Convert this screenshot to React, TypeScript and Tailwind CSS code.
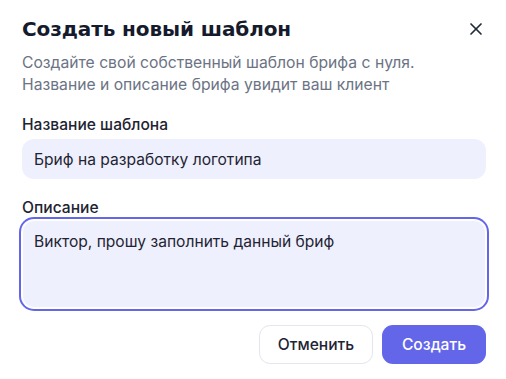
import { X } from "lucide-react";

export default function App() {
  return (
    <div className="min-h-screen w-full bg-white font-['Inter','Noto_Sans',sans-serif] text-[#1f2937]">
      <div className="flex flex-col pl-[22px] pr-[20px] pt-[14px]">
        <div className="flex items-center justify-between">
          <h2 className="font-['DejaVu_Sans',sans-serif] text-[20px] font-bold leading-[30px] tracking-[-0.1px] text-[#151b2c]">
            Создать новый шаблон
          </h2>
          <button className="-mr-[2px] flex h-6 w-6 items-center justify-center text-[#1f2937]">
            <X size={20} strokeWidth={2} />
          </button>
        </div>
        <p className="mt-[8px] text-[15.7px] leading-[22px] text-[#6b7384]">
          Создайте свой собственный шаблон брифа с нуля.
          <br />
          Название и описание брифа увидит ваш клиент
        </p>

        <label className="mt-[18px] text-[15.6px] font-medium leading-[22px] text-[#1e2433]">
          Название шаблона
        </label>
        <input
          defaultValue="Бриф на разработку логотипа"
          className="mt-[3px] h-[40px] w-full rounded-[12px] bg-[#eff0fd] px-[12px] text-[15.6px] text-[#1e2433] outline-none"
        />

        <label className="mt-[18px] text-[15.6px] font-medium leading-[22px] text-[#1e2433]">
          Описание
        </label>
        <textarea
          defaultValue="Виктор, прошу заполнить данный бриф"
          className="mt-[1px] h-[88px] w-full resize-none rounded-[12px] border border-white bg-[#eff0fd] px-[11px] pb-[9px] pt-[10px] text-[15.6px] leading-[22px] text-[#1e2433] outline-none ring-2 ring-[#6466e9] ring-offset-1 ring-offset-white"
        />

        <div className="mt-[17px] flex justify-end gap-[9px]">
          <button className="h-[39px] w-[114px] rounded-[11px] border border-[#e3e6ee] bg-white text-[15.6px] font-medium text-[#1e2433]">
            Отменить
          </button>
          <button className="h-[39px] w-[104px] rounded-[11px] bg-[#6466e9] text-[15.6px] font-medium text-white">
            Создать
          </button>
        </div>
      </div>
    </div>
  );
}
